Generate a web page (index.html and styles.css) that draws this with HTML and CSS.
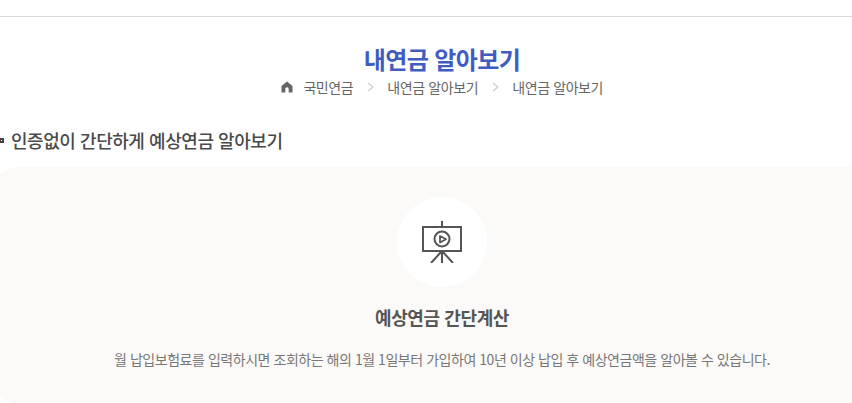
FILE: index.html
```html
<!DOCTYPE html>
<html lang="ko">
<head>
    <meta charset="UTF-8">
    <meta name="viewport" content="width=device-width, initial-scale=1.0">
    <title>내연금 알아보기</title>
    <link rel="stylesheet" href="styles.css">
</head>
<body>
    <div class="top-line"></div>
    <div class="container">
        <h1 class="page-title">내연금 알아보기</h1>
        <div class="breadcrumb">
            <svg class="home-icon" width="12" height="12" viewBox="0 0 12 12">
                <path d="M6 .5 .5 5V11.500h3.800V8a1.700 1.700 0 0 1 3.400 0v3.500h3.800V5z" fill="#666"/>
            </svg>
            <span>국민연금</span>
            <svg class="crumb-arrow" width="7" height="10" viewBox="0 0 7 10">
                <path d="M1 1l5 4-5 4" fill="none" stroke="#ccc" stroke-width="1.2"/>
            </svg>
            <span>내연금 알아보기</span>
            <svg class="crumb-arrow" width="7" height="10" viewBox="0 0 7 10">
                <path d="M1 1l5 4-5 4" fill="none" stroke="#ccc" stroke-width="1.2"/>
            </svg>
            <span>내연금 알아보기</span>
        </div>
        <h2 class="section-title">인증없이 간단하게 예상연금 알아보기</h2>
        <div class="card">
            <div class="icon-circle">
                <svg width="42" height="42" viewBox="0 0 42 42" fill="none" stroke="#555" stroke-width="2">
                    <path d="M21 0v6"/>
                    <rect x="2" y="6" width="38" height="24"/>
                    <circle cx="21" cy="18" r="7.500"/>
                    <path d="M19 15v6.500l6-3.250z" stroke-width="1.800" stroke-linejoin="round"/>
                    <path d="M21 30v12M21 30 10 42M21 30l11 12"/>
                </svg>
            </div>
            <h3 class="card-title">예상연금 간단계산</h3>
            <p class="card-text">월 납입보험료를 입력하시면 조회하는 해의 1월 1일부터 가입하여 10년 이상 납입 후 예상연금액을 알아볼 수 있습니다.</p>
        </div>
    </div>
</body>
</html>
```
FILE: styles.css
```css
html, body {
    overflow: hidden;
}
body {
    margin: 0;
    height: 403px;
    background: white;
    font-family: "Noto Sans CJK KR", "Noto Sans", sans-serif;
    color: #666;
}
.top-line {
    height: 16px;
    border-bottom: 1px solid #d9d9d9;
}
.container {
    width: 900px;
    margin-left: -8px;
}
.page-title {
    margin: 25px 0 0;
    font-size: 24px;
    line-height: 34px;
    font-weight: 700;
    letter-spacing: -0.6px;
    text-align: center;
    color: #3f5cc0;
}
.breadcrumb {
    display: flex;
    justify-content: center;
    align-items: center;
    gap: 13.5px;
    height: 22px;
    font-size: 14px;
    letter-spacing: -0.4px;
    color: #666;
}
.home-icon {
    margin-right: -3px;
}
.section-title {
    position: relative;
    margin: 29px 0 0;
    padding-left: 19px;
    font-size: 18px;
    line-height: 26px;
    font-weight: 500;
    letter-spacing: -0.45px;
    color: #4a4a4a;
}
.section-title::before {
    content: "";
    position: absolute;
    left: 7px;
    top: 11px;
    width: 5px;
    height: 5px;
    box-sizing: border-box;
    border: 2px solid #444;
}
.card {
    margin-top: 14px;
    padding-top: 30px;
    height: 237px;
    box-sizing: border-box;
    background: #fbfaf8;
    border-radius: 26px;
    text-align: center;
}
.icon-circle {
    display: flex;
    align-items: center;
    justify-content: center;
    width: 90px;
    height: 90px;
    margin: 0 auto;
    border-radius: 50%;
    background: white;
}
.card-title {
    margin: 17px 0 0;
    font-size: 18px;
    line-height: 26px;
    font-weight: 700;
    letter-spacing: -0.4px;
    color: #555;
}
.card-text {
    margin: 19px 0 0;
    font-size: 14px;
    line-height: 20px;
    letter-spacing: -0.46px;
    color: #777;
}
```
